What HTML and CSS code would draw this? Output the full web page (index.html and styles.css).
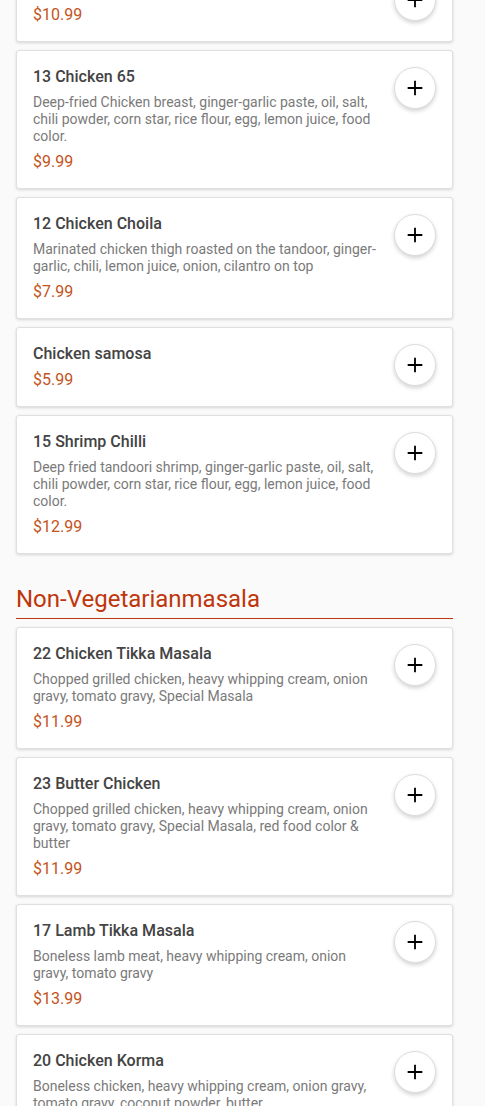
FILE: index.html
```html
<!DOCTYPE html>
<html lang="en">
<head>
  <meta charset="UTF-8" />
  <meta name="viewport" content="width=device-width, initial-scale=1.0"/>
  <title>Menu</title>
  <link rel="stylesheet" href="styles.css">
</head>
<body>
  <div class="menu">
    <!-- Appetizers (scrolled) -->
    <section class="category">
      <div class="item-card">
        <div class="item-info">
          <h4 class="item-name">11 Chicken Lollipop</h4>
          <p class="item-price">$10.99</p>
        </div>
        <button class="add-btn" aria-label="Add">
          <svg viewBox="0 0 24 24"><path d="M12 4v16M4 12h16"/></svg>
        </button>
      </div>
      <div class="item-card">
        <div class="item-info">
          <h4 class="item-name">13 Chicken 65</h4>
          <p class="item-desc">Deep-fried Chicken breast, ginger-garlic paste, oil, salt, chili powder, corn star, rice flour, egg, lemon juice, food color.</p>
          <p class="item-price">$9.99</p>
        </div>
        <button class="add-btn" aria-label="Add">
          <svg viewBox="0 0 24 24"><path d="M12 4v16M4 12h16"/></svg>
        </button>
      </div>
      <div class="item-card">
        <div class="item-info">
          <h4 class="item-name">12 Chicken Choila</h4>
          <p class="item-desc">Marinated chicken thigh roasted on the tandoor, ginger-garlic, chili, lemon juice, onion, cilantro on top</p>
          <p class="item-price">$7.99</p>
        </div>
        <button class="add-btn" aria-label="Add">
          <svg viewBox="0 0 24 24"><path d="M12 4v16M4 12h16"/></svg>
        </button>
      </div>
      <div class="item-card">
        <div class="item-info">
          <h4 class="item-name">Chicken samosa</h4>
          <p class="item-price">$5.99</p>
        </div>
        <button class="add-btn" aria-label="Add">
          <svg viewBox="0 0 24 24"><path d="M12 4v16M4 12h16"/></svg>
        </button>
      </div>
      <div class="item-card">
        <div class="item-info">
          <h4 class="item-name">15 Shrimp Chilli</h4>
          <p class="item-desc">Deep fried tandoori shrimp, ginger-garlic paste, oil, salt, chili powder, corn star, rice flour, egg, lemon juice, food color.</p>
          <p class="item-price">$12.99</p>
        </div>
        <button class="add-btn" aria-label="Add">
          <svg viewBox="0 0 24 24"><path d="M12 4v16M4 12h16"/></svg>
        </button>
      </div>
    </section>

    <!-- Non-Veg Masala -->
    <section class="category">
      <h2 class="category-title">Non-Vegetarianmasala</h2>
      <div class="item-card">
        <div class="item-info">
          <h4 class="item-name">22 Chicken Tikka Masala</h4>
          <p class="item-desc">Chopped grilled chicken, heavy whipping cream, onion gravy, tomato gravy, Special Masala</p>
          <p class="item-price">$11.99</p>
        </div>
        <button class="add-btn" aria-label="Add">
          <svg viewBox="0 0 24 24"><path d="M12 4v16M4 12h16"/></svg>
        </button>
      </div>
      <div class="item-card">
        <div class="item-info">
          <h4 class="item-name">23 Butter Chicken</h4>
          <p class="item-desc">Chopped grilled chicken, heavy whipping cream, onion gravy, tomato gravy, Special Masala, red food color &amp; butter</p>
          <p class="item-price">$11.99</p>
        </div>
        <button class="add-btn" aria-label="Add">
          <svg viewBox="0 0 24 24"><path d="M12 4v16M4 12h16"/></svg>
        </button>
      </div>
      <div class="item-card">
        <div class="item-info">
          <h4 class="item-name">17 Lamb Tikka Masala</h4>
          <p class="item-desc">Boneless lamb meat, heavy whipping cream, onion gravy, tomato gravy</p>
          <p class="item-price">$13.99</p>
        </div>
        <button class="add-btn" aria-label="Add">
          <svg viewBox="0 0 24 24"><path d="M12 4v16M4 12h16"/></svg>
        </button>
      </div>
      <div class="item-card">
        <div class="item-info">
          <h4 class="item-name">20 Chicken Korma</h4>
          <p class="item-desc">Boneless chicken, heavy whipping cream, onion gravy, tomato gravy, coconut powder, butter</p>
          <p class="item-price">$12.99</p>
        </div>
        <button class="add-btn" aria-label="Add">
          <svg viewBox="0 0 24 24"><path d="M12 4v16M4 12h16"/></svg>
        </button>
      </div>
    </section>
  </div>
</body>
</html>
```
FILE: styles.css
```css
:root {
  --accent: #bf360c;
  --price: #c4531c;
  --title: #444;
  --muted: #7a7a7a;
  --page-bg: #fafafa;
}
* {
  box-sizing: border-box;
}
body {
  font-family: Roboto, 'Noto Sans', Arial, sans-serif;
  background: var(--page-bg);
  margin: 0;
  overflow: hidden;
}
.menu {
  width: 437px;
  margin: -38px 0 0 16px;
}
.category-title {
  font-size: 24px;
  font-weight: 400;
  line-height: 26px;
  color: var(--accent);
  margin: 32px 0 8px;
  padding-bottom: 6px;
  border-bottom: 1px solid var(--accent);
}
.item-card {
  display: flex;
  align-items: flex-start;
  gap: 12px;
  background: #fff;
  border: 1px solid #e0e0e0;
  border-radius: 3px;
  padding: 16px;
  margin-bottom: 8px;
  box-shadow: 0 1px 3px rgba(0,0,0,0.15);
}
.item-info {
  flex: 1;
  min-width: 0;
}
.item-name {
  font-family: 'Roboto Medium', Roboto, sans-serif;
  font-size: 16px;
  font-weight: 500;
  line-height: 20px;
  color: var(--title);
  margin: 0;
}
.item-desc {
  font-size: 14px;
  line-height: 17px;
  color: var(--muted);
  margin: 7px 0 0;
  padding-right: 4px;
}
.item-price {
  font-size: 16px;
  line-height: 20px;
  color: var(--price);
  margin: 6px 0 0;
}
.item-desc + .item-price {
  margin-top: 7px;
}
.add-btn {
  flex: none;
  width: 42px;
  height: 42px;
  border-radius: 50%;
  border: 1px solid #ddd;
  background: #fff;
  padding: 0;
  display: flex;
  align-items: center;
  justify-content: center;
  box-shadow: 0 2px 4px rgba(0,0,0,0.18);
  cursor: pointer;
}
.add-btn svg {
  width: 22px;
  height: 22px;
  fill: none;
  stroke: #000;
  stroke-width: 2;
}
```
